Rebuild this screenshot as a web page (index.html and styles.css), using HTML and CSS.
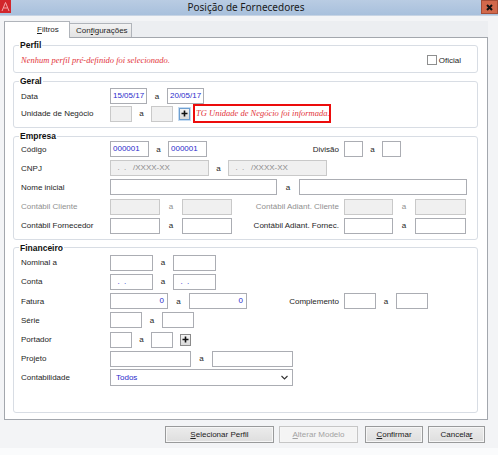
FILE: index.html
```html
<!DOCTYPE html>
<html lang="pt-BR">
<head>
    <meta charset="UTF-8">
    <title>Posição de Fornecedores</title>
    <link rel="stylesheet" href="styles.css">
</head>
<body>

<div class="window">
    <div class="titlebar">
        <svg class="app-icon" width="11" height="13" viewBox="0 0 11 13">
            <rect width="11" height="13" fill="#d2262b"/>
            <path d="M2 11 L5.5 2.5 L9 11 M3.5 8 H7.5" stroke="#f4a9aa" stroke-width="1" fill="none"/>
        </svg>
        <div class="title">Posição de Fornecedores</div>
        <div class="close">
            <svg width="7" height="7" viewBox="0 0 7 7"><path d="M1 1 L6 6 M6 1 L1 6" stroke="#111" stroke-width="2"/></svg>
        </div>
    </div>

    <div class="content">
        <div class="tabs">
            <div class="tab active"><u>F</u>iltros</div>
            <div class="tab">Con<u>f</u>igurações</div>
        </div>

        <div class="panel">
            <!-- Perfil -->
            <fieldset class="group perfil">
                <legend>Perfil</legend>
                <div class="row">
                    <span class="warn">Nenhum perfil pré-definido foi selecionado.</span>
                    <div class="oficial"><span class="chk"></span>Oficial</div>
                </div>
            </fieldset>

            <!-- Geral -->
            <fieldset class="group">
                <legend>Geral</legend>
                <div class="rows flat">
                    <div class="row">
                        <span class="lbl">Data</span>
                        <span class="fld w37">15/05/17</span>
                        <span class="a w20">a</span>
                        <span class="fld w37">20/05/17</span>
                    </div>
                    <div class="row tall">
                        <span class="lbl">Unidade de Negócio</span>
                        <span class="fld dis w22"></span>
                        <span class="a w19">a</span>
                        <span class="fld dis w22"></span>
                        <span class="plus focus"><svg width="7" height="7" viewBox="0 0 7 7"><path d="M3.5 0.5 V6.5 M0.5 3.5 H6.5" stroke="#111" stroke-width="1.6"/></svg></span>
                        <span class="notice">TG Unidade de Negócio foi informada.</span>
                    </div>
                </div>
            </fieldset>

            <!-- Empresa -->
            <fieldset class="group tight">
                <legend>Empresa</legend>
                <div class="rows">
                    <div class="row">
                        <div class="half">
                            <span class="lbl">Código</span>
                            <span class="fld w39">000001</span>
                            <span class="a w19">a</span>
                            <span class="fld w39">000001</span>
                        </div>
                        <span class="rlbl">Divisão</span>
                        <span class="fld w19"></span>
                        <span class="a w19">a</span>
                        <span class="fld w19"></span>
                    </div>
                    <div class="row">
                        <span class="lbl">CNPJ</span>
                        <span class="fld dis w99">  .  .   /XXXX-XX</span>
                        <span class="a w19">a</span>
                        <span class="fld dis w99">  .  .   /XXXX-XX</span>
                    </div>
                    <div class="row">
                        <span class="lbl">Nome inicial</span>
                        <span class="fld w167"></span>
                        <span class="a w22">a</span>
                        <span class="fld w168"></span>
                    </div>
                    <div class="row off">
                        <div class="half">
                            <span class="lbl">Contábil Cliente</span>
                            <span class="fld dis w50"></span>
                            <span class="a w22">a</span>
                            <span class="fld dis w50"></span>
                        </div>
                        <span class="rlbl">Contábil Adiant. Cliente</span>
                        <span class="fld dis w49"></span>
                        <span class="a w22">a</span>
                        <span class="fld dis w51"></span>
                    </div>
                    <div class="row">
                        <div class="half">
                            <span class="lbl">Contábil Fornecedor</span>
                            <span class="fld w50"></span>
                            <span class="a w22">a</span>
                            <span class="fld w50"></span>
                        </div>
                        <span class="rlbl">Contábil Adiant. Fornec.</span>
                        <span class="fld w49"></span>
                        <span class="a w22">a</span>
                        <span class="fld w51"></span>
                    </div>
                </div>
            </fieldset>

            <!-- Financeiro -->
            <fieldset class="group financeiro">
                <legend>Financeiro</legend>
                <div class="rows">
                    <div class="row">
                        <span class="lbl">Nominal a</span>
                        <span class="fld w43"></span>
                        <span class="a w20">a</span>
                        <span class="fld w43"></span>
                    </div>
                    <div class="row">
                        <span class="lbl">Conta</span>
                        <span class="fld w43">  .  .</span>
                        <span class="a w20">a</span>
                        <span class="fld w43">  .  .</span>
                    </div>
                    <div class="row">
                        <div class="half">
                            <span class="lbl">Fatura</span>
                            <span class="fld num w58">0</span>
                            <span class="a w21">a</span>
                            <span class="fld num w58">0</span>
                        </div>
                        <span class="rlbl">Complemento</span>
                        <span class="fld w32"></span>
                        <span class="a w20">a</span>
                        <span class="fld w32"></span>
                    </div>
                    <div class="row">
                        <span class="lbl">Série</span>
                        <span class="fld w32"></span>
                        <span class="a w20">a</span>
                        <span class="fld w32"></span>
                    </div>
                    <div class="row">
                        <span class="lbl">Portador</span>
                        <span class="fld w22"></span>
                        <span class="a w19">a</span>
                        <span class="fld w22"></span>
                        <span class="plus"><svg width="7" height="7" viewBox="0 0 7 7"><path d="M3.5 0.5 V6.5 M0.5 3.5 H6.5" stroke="#111" stroke-width="1.6"/></svg></span>
                    </div>
                    <div class="row">
                        <span class="lbl">Projeto</span>
                        <span class="fld w81"></span>
                        <span class="a w21">a</span>
                        <span class="fld w81"></span>
                    </div>
                    <div class="row">
                        <span class="lbl">Contabilidade</span>
                        <div class="sel">
                            <span>Todos</span>
                            <svg class="arrow" width="7" height="5" viewBox="0 0 7 5"><path d="M0.5 1 L3.5 4 L6.5 1" stroke="#333" stroke-width="1.1" fill="none"/></svg>
                        </div>
                    </div>
                </div>
            </fieldset>
        </div>

        <div class="actions">
            <button class="btn w109"><u>S</u>elecionar Perfil</button>
            <button class="btn off w79" disabled><u>A</u>lterar Modelo</button>
            <button class="btn w58"><u>C</u>onfirmar</button>
            <button class="btn w57">Cancela<u>r</u></button>
        </div>
        <div class="strip"></div>
    </div>
</div>

</body>
</html>
```

FILE: styles.css
```css
body {
    margin: 0;
    font-family: "Liberation Sans", Arial, sans-serif;
    font-size: 8px;
    color: #1e1e1e;
    background-color: #f3f4f6;
}
.window {
    width: 498px;
    height: 455px;
    display: flex;
    flex-direction: column;
    overflow: hidden;
}
/* Barra de titulo */
.titlebar {
    height: 16px;
    display: flex;
    align-items: flex-start;
    background: linear-gradient(#b9cce3, #a8c0dc);
    border-bottom: 1px solid #c7d4e4;
    box-sizing: border-box;
    flex: none;
}
.app-icon {
    flex: none;
}
.title {
    flex: 1;
    text-align: center;
    font-family: "Noto Sans", "Liberation Sans", sans-serif;
    font-size: 10px;
    line-height: 15px;
    color: #1a1a1a;
}
.close {
    width: 17px;
    height: 14px;
    background-color: #d2684b;
    border: 1px solid #a44c36;
    box-sizing: border-box;
    display: flex;
    justify-content: center;
    align-items: center;
    flex: none;
}
.content {
    flex: 1;
    display: flex;
    flex-direction: column;
    padding-top: 5px;
}
/* Abas */
.tabs {
    display: flex;
    align-items: flex-end;
    height: 16px;
    margin: 0 10px 0 4px;
    background-color: #eceef1;
    position: relative;
    z-index: 1;
}
.tab {
    height: 14px;
    width: 62px;
    box-sizing: border-box;
    border: 1px solid #b0b4ba;
    border-left: none;
    border-bottom: none;
    background: linear-gradient(#f3f3f3, #e3e3e3);
    padding-left: 6px;
    line-height: 13px;
    white-space: nowrap;
}
.tab.active {
    height: 17px;
    width: 66px;
    margin-bottom: -1px;
    border-left: 1px solid #a3a7ad;
    background: #ffffff;
    padding-left: 32px;
    line-height: 15px;
}
.panel {
    margin: 0 10px 0 4px;
    border: 1px solid #a3a7ad;
    background-color: #ffffff;
    padding: 0 9px 6px 8px;
}
/* Grupos */
.group {
    margin: 3px 0 0 0;
    padding: 2px 7px 4px 7px;
    border: 1px solid #d8dde4;
    border-radius: 3px;
    background-color: #ffffff;
    min-width: 0;
}
.group legend {
    font-weight: bold;
    font-size: 8.5px;
    line-height: 10px;
    padding: 0 1px;
    margin-left: -2px;
    color: #111111;
}
.perfil {
    margin-top: 2px;
}
.tight {
    padding-top: 0;
    padding-bottom: 5px;
}
.financeiro {
    padding-bottom: 26px;
}
.rows {
    display: flex;
    flex-direction: column;
    gap: 3.2px;
}
.rows.flat {
    gap: 0;
}
.row {
    display: flex;
    align-items: center;
    height: 16px;
    white-space: nowrap;
}
.row.tall {
    height: 19px;
}
.half {
    width: 229px;
    display: flex;
    align-items: center;
    flex: none;
}
.lbl {
    width: 89px;
    flex: none;
}
.rlbl {
    width: 94px;
    padding-right: 5px;
    box-sizing: border-box;
    text-align: right;
    flex: none;
}
.off .lbl,
.off .rlbl,
.off .a {
    color: #8f8f8f;
}
.a {
    text-align: center;
    flex: none;
}
/* Campos */
.fld {
    height: 16px;
    box-sizing: border-box;
    border: 1px solid #abadb3;
    background-color: #ffffff;
    color: #2b2bcc;
    padding: 0 2px;
    line-height: 14px;
    white-space: pre;
    overflow: hidden;
    flex: none;
}
.fld.dis {
    background-color: #f0f0f0;
    border-color: #c9c9c9;
    color: #8c8c8c;
}
.fld.num {
    text-align: right;
    padding-right: 3px;
}
.plus {
    width: 11px;
    height: 12px;
    box-sizing: border-box;
    border: 1px solid #8b8b8b;
    background: linear-gradient(#f4f4f4, #dadada);
    display: flex;
    justify-content: center;
    align-items: center;
    margin-left: 7px;
    flex: none;
}
.plus.focus {
    margin-left: 6px;
    border-color: #6f9fd0;
    box-shadow: 0 0 0 1px #c5dcf3;
}
.notice {
    width: 138px;
    height: 19px;
    box-sizing: border-box;
    margin-left: 3px;
    border: 2px solid #ec0c0c;
    font-family: "Liberation Serif", "Times New Roman", serif;
    font-style: italic;
    font-size: 8.5px;
    line-height: 15px;
    color: #e3343a;
    padding-left: 1px;
    overflow: hidden;
    flex: none;
}
.warn {
    font-family: "Liberation Serif", "Times New Roman", serif;
    font-style: italic;
    font-size: 8.5px;
    color: #e3343a;
}
.oficial {
    margin-left: auto;
    margin-right: 9px;
    display: flex;
    align-items: center;
}
.chk {
    width: 10px;
    height: 10px;
    box-sizing: border-box;
    border: 1px solid #8e8f8f;
    background-color: #ffffff;
    margin-right: 2px;
}
.sel {
    width: 183px;
    height: 17px;
    box-sizing: border-box;
    border: 1px solid #abadb3;
    display: flex;
    align-items: center;
    padding: 0 4px 0 5px;
    color: #2b2bcc;
    flex: none;
}
.sel .arrow {
    margin-left: auto;
}
/* Botoes */
.actions {
    display: flex;
    justify-content: flex-end;
    padding: 6px 13px 0 0;
}
.btn {
    height: 17px;
    box-sizing: border-box;
    border: 1px solid #999a9b;
    background: linear-gradient(#ececec, #dedede);
    box-shadow: inset 0 0 0 1px #f6f6f6;
    font-family: "Liberation Sans", Arial, sans-serif;
    font-size: 8px;
    color: #1b1b1b;
    padding: 0;
    margin-left: 5px;
}
.btn.off {
    border-color: #c6c6c6;
    background: #f4f4f4;
    color: #a3a3a3;
}
.btn.w58 {
    margin-left: 7px;
}
.strip {
    margin-top: auto;
    height: 7px;
    background-color: #fafbfc;
}
.w19 { width: 19px; }
.w20 { width: 20px; }
.w21 { width: 21px; }
.w22 { width: 22px; }
.w32 { width: 32px; }
.w37 { width: 37px; }
.w39 { width: 39px; }
.w43 { width: 43px; }
.w49 { width: 49px; }
.w50 { width: 50px; }
.w51 { width: 51px; }
.w57 { width: 57px; }
.w58 { width: 58px; }
.w79 { width: 79px; }
.w81 { width: 81px; }
.w99 { width: 99px; }
.w109 { width: 109px; }
.w167 { width: 167px; }
.w168 { width: 168px; }
```
